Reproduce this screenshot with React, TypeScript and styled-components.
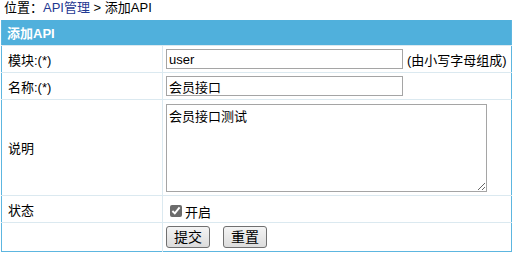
import styled, { createGlobalStyle } from "styled-components";

const GlobalStyle = createGlobalStyle`
  html, body {
    margin: 0;
    padding: 0;
    background: #ffffff;
  }
  body {
    font-family: "Liberation Sans", "Noto Sans CJK SC", sans-serif;
    font-size: 13px;
    color: #000;
  }
`;

const Page = styled.div`
  width: 513px;
  height: 256px;
  overflow: hidden;
  padding: 0 1px;
  box-sizing: border-box;
`;

const Location = styled.div`
  height: 19px;
  line-height: 15px;
  padding-left: 3px;
  font-size: 13px;

  a {
    color: #1f3a93;
    text-decoration: none;
  }
`;

const FormTable = styled.table`
  width: 511px;
  border-collapse: collapse;
  border: 1px solid #5db6e0;
  table-layout: fixed;
`;

const LabelCol = styled.col`
  width: 161px;
`;

const HeaderCell = styled.th`
  height: 25px;
  padding: 0 0 0 5px;
  background: #50b0dc;
  border-top: 1px solid #ffffff;
  color: #ffffff;
  font-size: 13px;
  font-weight: bold;
  text-align: left;
`;

const Row = styled.tr<{ $h: number }>`
  height: ${(p) => p.$h}px;

  td {
    border-top: 1px solid #dbe9f0;
    height: ${(p) => p.$h - 1}px;
    box-sizing: border-box;
  }
`;

const LabelCell = styled.td`
  padding: 0 0 0 6px;
  border-right: 1px solid #dbe9f0;
  vertical-align: middle;
  white-space: nowrap;
`;

const FieldCell = styled.td`
  padding: 0 3px;
  vertical-align: middle;
  white-space: nowrap;
`;

const TextInput = styled.input`
  width: 237px;
  height: 20px;
  box-sizing: border-box;
  border: 1px solid #a5a5a5;
  padding: 1px 2px;
  font: inherit;
  font-size: 13px;
  vertical-align: middle;
`;

const Hint = styled.span`
  margin-left: 4px;
  vertical-align: middle;
`;

const TextArea = styled.textarea`
  display: block;
  width: 321px;
  height: 88px;
  box-sizing: border-box;
  border: 1px solid #a5a5a5;
  padding: 1px 2px;
  font: inherit;
  font-size: 13px;
  resize: both;
`;

const CheckLabel = styled.label`
  display: inline-flex;
  align-items: center;
  gap: 3px;
  margin-left: 4px;
  padding-top: 4px;

  input {
    margin: 0;
    width: 12px;
    height: 12px;
    accent-color: #6b6b6b;
  }
`;

const Button = styled.button`
  height: 22px;
  padding: 0 7px;
  margin-right: 13px;
  border: 1px solid #707070;
  border-radius: 3px;
  background: linear-gradient(#f4f4f4, #dcdcdc);
  font: inherit;
  font-size: 14px;
  line-height: 18px;
  color: #000;
  vertical-align: middle;
`;

export default function App() {
  return (
    <Page>
      <GlobalStyle />
      <Location>
        位置：<a href="#">API管理</a> &gt; 添加API
      </Location>
      <FormTable>
        <colgroup>
          <LabelCol />
          <col />
        </colgroup>
        <thead>
          <tr>
            <HeaderCell colSpan={2}>添加API</HeaderCell>
          </tr>
        </thead>
        <tbody>
          <Row $h={27}>
            <LabelCell>模块:(*)</LabelCell>
            <FieldCell>
              <TextInput defaultValue="user" />
              <Hint>(由小写字母组成)</Hint>
            </FieldCell>
          </Row>
          <Row $h={27}>
            <LabelCell>名称:(*)</LabelCell>
            <FieldCell>
              <TextInput defaultValue="会员接口" />
            </FieldCell>
          </Row>
          <Row $h={96}>
            <LabelCell>说明</LabelCell>
            <FieldCell>
              <TextArea defaultValue="会员接口测试" />
            </FieldCell>
          </Row>
          <Row $h={27}>
            <LabelCell>状态</LabelCell>
            <FieldCell>
              <CheckLabel>
                <input type="checkbox" defaultChecked />
                开启
              </CheckLabel>
            </FieldCell>
          </Row>
          <Row $h={29}>
            <LabelCell />
            <FieldCell>
              <Button>提交</Button>
              <Button>重置</Button>
            </FieldCell>
          </Row>
        </tbody>
      </FormTable>
    </Page>
  );
}
